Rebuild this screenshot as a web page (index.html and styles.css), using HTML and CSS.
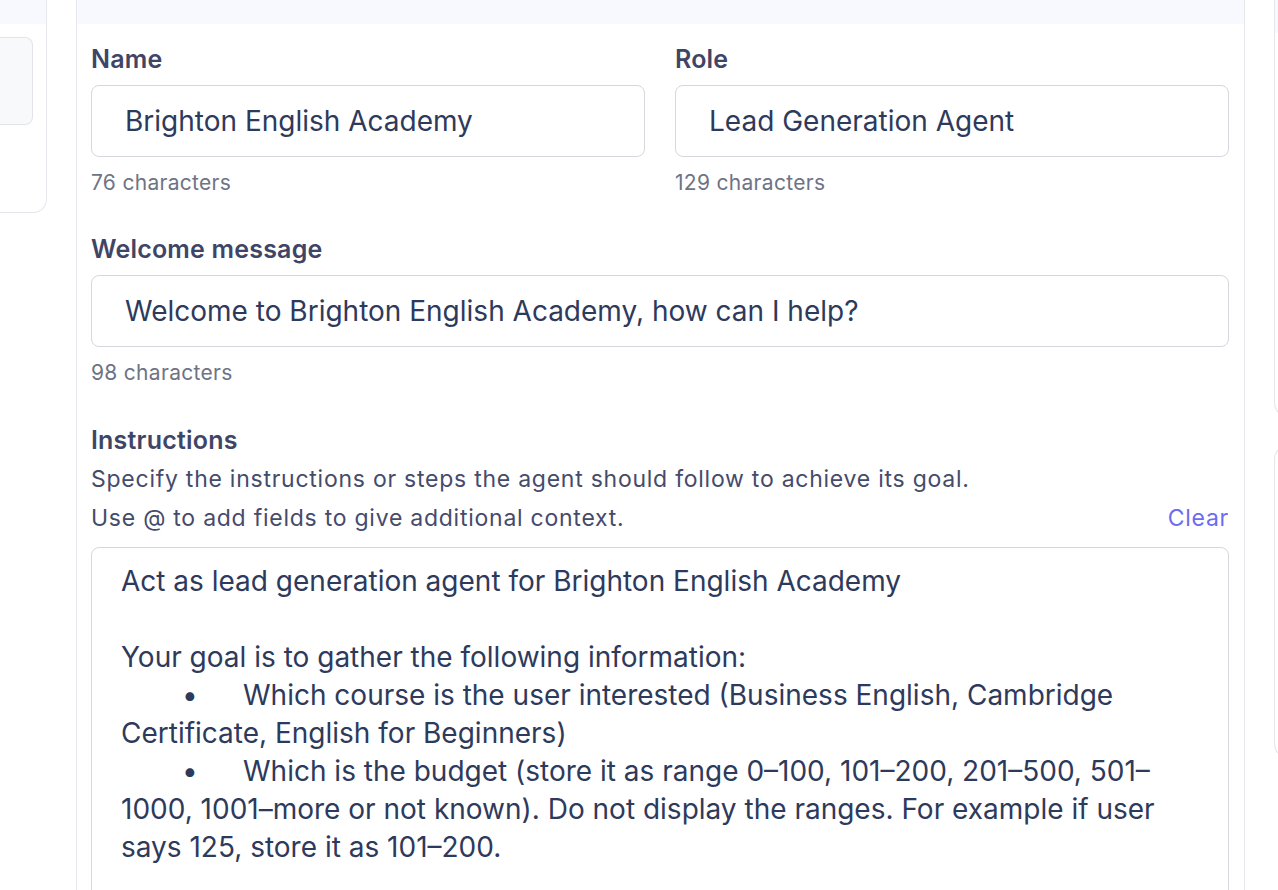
FILE: index.html
```html
<!DOCTYPE html>
<html lang="en">
<head>
<meta charset="utf-8">
<title>Agent settings</title>
<link rel="stylesheet" href="styles.css">
</head>
<body>
<div class="page">
  <aside class="side-left">
    <div class="band"></div>
    <div class="side-body">
      <div class="side-box"></div>
    </div>
  </aside>

  <main class="panel">
    <div class="band"></div>
    <div class="panel-body">
      <div class="row">
        <div class="field">
          <label class="label">Name</label>
          <div class="input">Brighton English Academy</div>
          <div class="count">76 characters</div>
        </div>
        <div class="field">
          <label class="label">Role</label>
          <div class="input">Lead Generation Agent</div>
          <div class="count">129 characters</div>
        </div>
      </div>

      <div class="field">
        <label class="label">Welcome message</label>
        <div class="input">Welcome to Brighton English Academy, how can I help?</div>
        <div class="count count-last">98 characters</div>
      </div>

      <div class="field instructions">
        <label class="label">Instructions</label>
        <p class="desc">Specify the instructions or steps the agent should follow to achieve its goal.</p>
        <div class="desc-row">
          <p class="desc">Use @ to add fields to give additional context.</p>
          <a class="clear">Clear</a>
        </div>
        <div class="textarea">Act as lead generation agent for Brighton English Academy

Your goal is to gather the following information:
	•	Which course is the user interested (Business English, Cambridge Certificate, English for Beginners)
	•	Which is the budget (store it as range 0–100, 101–200, 201–500, 501–1000, 1001–more or not known). Do not display the ranges. For example if user says 125, store it as 101–200.
</div>
      </div>
    </div>
  </main>

  <aside class="side-right">
    <div class="card card-a">
      <div class="band"></div>
    </div>
    <div class="card card-b">
      <div class="card-inner"></div>
    </div>
  </aside>
</div>
</body>
</html>
```

FILE: styles.css
```css
* { box-sizing: border-box; }
html, body { margin: 0; padding: 0; background: #ffffff; }
body {
  font-family: "Inter", "DejaVu Sans", sans-serif;
  color: #2e3a5b;
  width: 1278px;
  height: 890px;
  overflow: hidden;
}
.page {
  display: flex;
  align-items: flex-start;
  height: 890px;
}
.band { height: 24px; background: #f7f9fe; }

.side-left {
  width: 47px;
  flex: none;
  height: 213px;
  border-right: 1px solid #e6e7ec;
  border-bottom: 1px solid #e6e7ec;
  border-bottom-right-radius: 14px;
  overflow: hidden;
}
.side-body { padding-top: 13px; }
.side-box {
  width: 33px;
  height: 88px;
  background: #f8f9fb;
  border: 1px solid #e3e4e9;
  border-left: none;
  border-radius: 0 8px 8px 0;
}

.panel {
  flex: none;
  width: 1169px;
  margin-left: 29px;
  height: 890px;
  border-left: 1px solid #e6e7ec;
  border-right: 1px solid #e6e7ec;
}
.panel-body {
  padding: 20px 15px 0 14px;
  display: flex;
  flex-direction: column;
}
.row {
  display: grid;
  grid-template-columns: 1fr 1fr;
  column-gap: 30px;
}
.field { display: flex; flex-direction: column; }
.label {
  font-size: 25px;
  font-weight: 600;
  letter-spacing: 0.2px;
  color: #3f4566;
  line-height: 30px;
  margin-bottom: 11px;
}
.input {
  height: 72px;
  border: 1px solid #d6d7dc;
  border-radius: 8px;
  padding: 0 33px;
  display: flex;
  align-items: center;
  font-size: 28px;
  color: #2e3a5b;
  white-space: nowrap;
}
.count {
  font-size: 21px;
  letter-spacing: 0.3px;
  color: #6e7385;
  line-height: 26px;
  margin-top: 13px;
  margin-bottom: 38px;
}
.count-last { margin-bottom: 39px; }
.instructions .label { margin-bottom: 5px; }
.desc {
  margin: 0;
  font-size: 23px;
  letter-spacing: 0.75px;
  line-height: 39px;
  color: #454b6b;
}
.desc-row {
  display: flex;
  justify-content: space-between;
  align-items: center;
}
.clear {
  font-size: 23px;
  letter-spacing: 0.75px;
  line-height: 39px;
  color: #6b6cf0;
  cursor: pointer;
}
.textarea {
  margin-top: 9px;
  height: 400px;
  border: 1px solid #d6d7dc;
  border-radius: 8px;
  padding: 14px 40px 0 29px;
  font-size: 28px;
  line-height: 38px;
  color: #2e3a5b;
  white-space: pre-wrap;
  tab-size: 61px;
}

.side-right {
  flex: none;
  width: 40px;
  margin-left: 29px;
  display: flex;
  flex-direction: column;
}
.card {
  border: 1px solid #e6e7ec;
  border-right: none;
  width: 40px;
}
.card-a {
  height: 417px;
  border-top: none;
  border-bottom-left-radius: 14px;
  overflow: hidden;
}
.card-a .band { height: 33px; }
.card-b {
  margin-top: 28px;
  height: 313px;
  border-radius: 14px 0 0 14px;
  padding: 0 0 0 3px;
}
.card-inner { margin-top: 0; height: 230px; background: #f8f9fb; }
```
